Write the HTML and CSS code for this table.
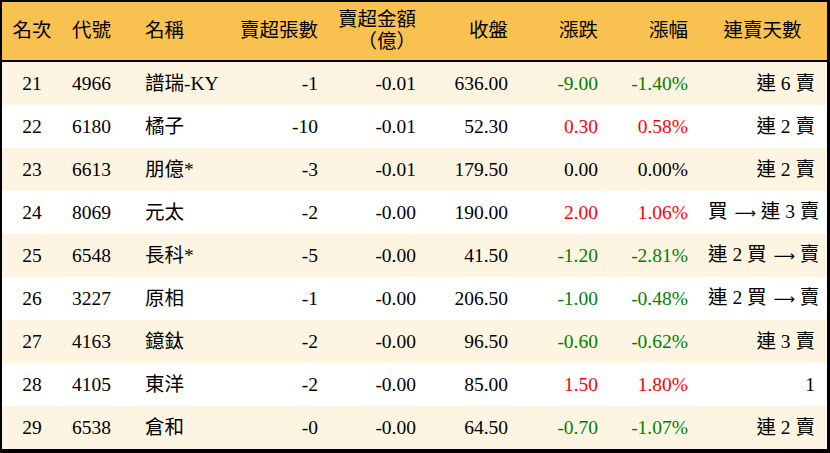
FILE: index.html
```html
<!DOCTYPE html>
<html lang="zh-Hant">
<head>
<meta charset="utf-8">
<link rel="stylesheet" href="styles.css">
</head>
<body>
<table class="rank">
  <colgroup>
    <col class="c-rank"><col class="c-code"><col class="c-name"><col class="c-vol"><col class="c-amt"><col class="c-close"><col class="c-chg"><col class="c-pct"><col class="c-days">
  </colgroup>
  <thead>
    <tr>
      <th class="center">名次</th>
      <th class="left">代號</th>
      <th class="left">名稱</th>
      <th class="right">賣超張數</th>
      <th class="right">賣超金額<br>（億）</th>
      <th class="right">收盤</th>
      <th class="right">漲跌</th>
      <th class="right">漲幅</th>
      <th class="center">連賣天數</th>
    </tr>
  </thead>
  <tbody>
    <tr class="odd"><td class="center">21</td><td class="left">4966</td><td class="left">譜瑞-KY</td><td class="right">-1</td><td class="right">-0.01</td><td class="right">636.00</td><td class="right down">-9.00</td><td class="right down">-1.40%</td><td class="right days">連 6 賣</td></tr>
    <tr><td class="center">22</td><td class="left">6180</td><td class="left">橘子</td><td class="right">-10</td><td class="right">-0.01</td><td class="right">52.30</td><td class="right up">0.30</td><td class="right up">0.58%</td><td class="right days">連 2 賣</td></tr>
    <tr class="odd"><td class="center">23</td><td class="left">6613</td><td class="left">朋億*</td><td class="right">-3</td><td class="right">-0.01</td><td class="right">179.50</td><td class="right">0.00</td><td class="right">0.00%</td><td class="right days">連 2 賣</td></tr>
    <tr><td class="center">24</td><td class="left">8069</td><td class="left">元太</td><td class="right">-2</td><td class="right">-0.00</td><td class="right">190.00</td><td class="right up">2.00</td><td class="right up">1.06%</td><td class="right days">買 <span class="arrow">⟶</span> 連 3 賣</td></tr>
    <tr class="odd"><td class="center">25</td><td class="left">6548</td><td class="left">長科*</td><td class="right">-5</td><td class="right">-0.00</td><td class="right">41.50</td><td class="right down">-1.20</td><td class="right down">-2.81%</td><td class="right days">連 2 買 <span class="arrow">⟶</span> 賣</td></tr>
    <tr><td class="center">26</td><td class="left">3227</td><td class="left">原相</td><td class="right">-1</td><td class="right">-0.00</td><td class="right">206.50</td><td class="right down">-1.00</td><td class="right down">-0.48%</td><td class="right days">連 2 買 <span class="arrow">⟶</span> 賣</td></tr>
    <tr class="odd"><td class="center">27</td><td class="left">4163</td><td class="left">鐿鈦</td><td class="right">-2</td><td class="right">-0.00</td><td class="right">96.50</td><td class="right down">-0.60</td><td class="right down">-0.62%</td><td class="right days">連 3 賣</td></tr>
    <tr><td class="center">28</td><td class="left">4105</td><td class="left">東洋</td><td class="right">-2</td><td class="right">-0.00</td><td class="right">85.00</td><td class="right up">1.50</td><td class="right up">1.80%</td><td class="right days">1</td></tr>
    <tr class="odd"><td class="center">29</td><td class="left">6538</td><td class="left">倉和</td><td class="right">-0</td><td class="right">-0.00</td><td class="right">64.50</td><td class="right down">-0.70</td><td class="right down">-1.07%</td><td class="right days">連 2 賣</td></tr>
  </tbody>
</table>
</body>
</html>
```
FILE: styles.css
```css
html, body {
  margin: 0;
  padding: 0;
  background: #ffffff;
}

.rank {
  width: 830px;
  table-layout: fixed;
  border-collapse: separate;
  border-spacing: 0;
  border-style: solid;
  border-color: #000;
  border-width: 2px 3px 4px 2px;
  font-family: "Liberation Serif", "Noto Sans CJK TC", serif;
  font-size: 19.5px;
  color: #000;
}

.c-rank { width: 60px; }
.c-code { width: 73px; }
.c-name { width: 95px; }
.c-vol { width: 98px; }
.c-amt { width: 98px; }
.c-close { width: 92px; }
.c-chg { width: 90px; }
.c-pct { width: 90px; }
.c-days { width: 129px; }

.rank thead th {
  background: #f9c250;
  height: 58px;
  font-weight: normal;
  line-height: 22px;
  border-bottom: 2px solid #000;
  padding: 0 10px;
  vertical-align: middle;
  white-space: nowrap;
}

.rank tbody td {
  height: 43px;
  padding: 0 10px;
  line-height: 22px;
  vertical-align: middle;
  white-space: nowrap;
}

.rank tbody tr.odd td {
  background: #fdf5e2;
}

.center { text-align: center; }
.left { text-align: left; }
.right { text-align: right; }

.rank td.days {
  padding-right: 12px;
}

.arrow {
  font-family: "DejaVu Sans", sans-serif;
  font-size: 15px;
  margin-left: 2px;
}

.up { color: #ff0000; }
.down { color: #008000; }
```
